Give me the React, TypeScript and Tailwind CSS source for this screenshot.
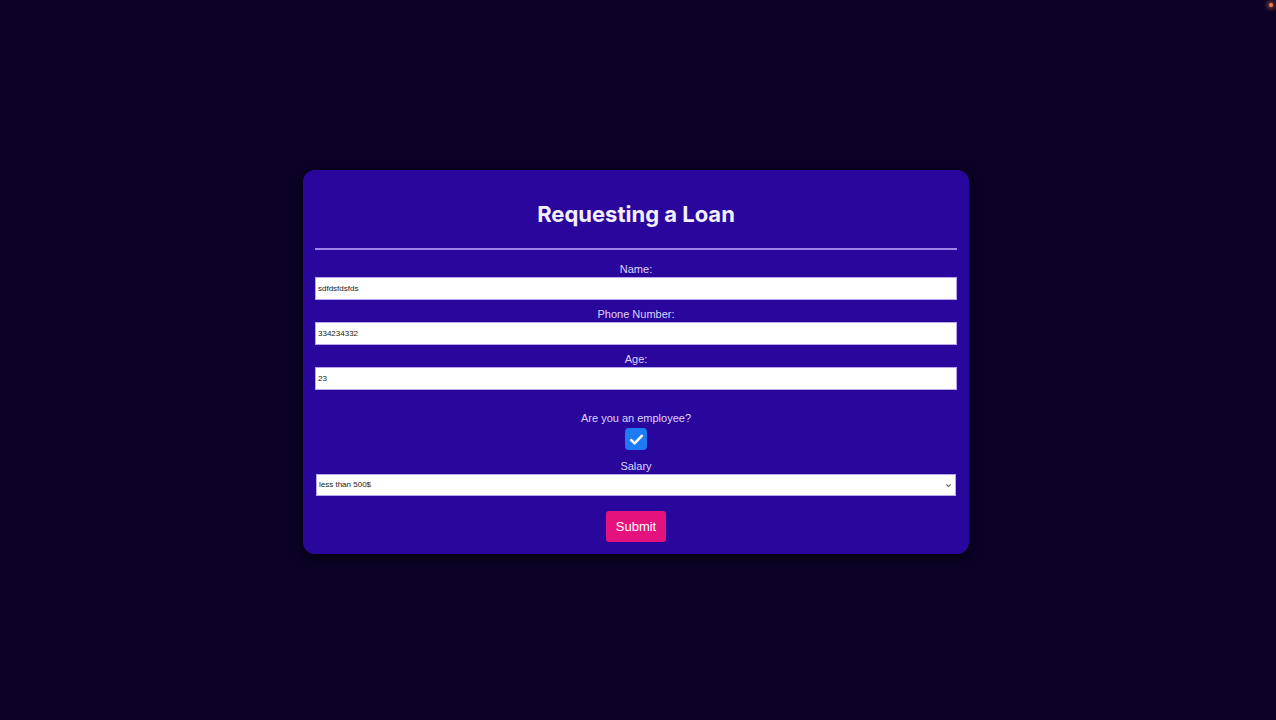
import React from "react";

const fields = [
  { label: "Name:", value: "sdfdsfdsfds" },
  { label: "Phone Number:", value: "334234332" },
  { label: "Age:", value: "23" },
];

export default function App() {
  const [employee, setEmployee] = React.useState(true);

  return (
    <div className="relative min-h-[720px] w-full bg-[#0b0226] flex justify-center pt-[170px] font-['Inter','Liberation_Sans',sans-serif]">
      <span className="absolute right-[3px] top-[3px] h-[4px] w-[4px] rounded-full bg-[#e9804f] shadow-[0_0_4px_2px_rgba(233,128,79,0.5)]" />

      <div className="mr-[4px] w-[666px] h-[384px] self-start rounded-[12px] bg-[#2a079c] px-3 pt-[30px] pb-3 shadow-[0_4px_14px_rgba(0,0,0,0.6)] flex flex-col items-center">
        <h1 className="text-[22px] leading-[28px] font-bold text-[#f3efff]">Requesting a Loan</h1>
        <div className="mt-[20px] h-[2px] w-full bg-[#9c84e8]" />

        <div className="mt-[12px] flex w-full flex-col">
          {fields.map((f, i) => (
            <div key={f.label} className={`flex flex-col items-center ${i > 0 ? "mt-[7px]" : ""}`}>
              <label className="text-[11px] leading-[14px] text-[#ddd3ff] font-['Liberation_Sans',sans-serif]">{f.label}</label>
              <input
                defaultValue={f.value}
                className="mt-[1px] h-[23px] w-full bg-white border border-[#b9a6f2] px-[2px] text-[8px] text-[#222] font-['Liberation_Sans',sans-serif] outline-none"
              />
            </div>
          ))}
        </div>

        <p className="mt-[21px] text-[11px] leading-[14px] text-[#ddd3ff] font-['Liberation_Sans',sans-serif]">Are you an employee?</p>
        <button
          type="button"
          onClick={() => setEmployee(!employee)}
          className="mt-[3px] flex h-[22px] w-[22px] items-center justify-center rounded-[4px] bg-[#1f7bf4]"
        >
          {employee && (
            <svg viewBox="0 0 16 16" className="h-[17px] w-[17px]" fill="none" stroke="white" strokeWidth="2.4" strokeLinecap="round" strokeLinejoin="round">
              <path d="M3 8.5l3.2 3.2L13 4.5" />
            </svg>
          )}
        </button>

        <p className="mt-[9px] text-[11px] leading-[14px] text-[#ddd3ff] font-['Liberation_Sans',sans-serif]">Salary</p>
        <div className="relative mt-[1px] w-[640px]">
          <select
            defaultValue="lt500"
            className="block h-[22px] w-full appearance-none bg-white border border-[#b9a6f2] px-[2px] text-[8px] text-[#222] font-['Liberation_Sans',sans-serif] outline-none"
          >
            <option value="lt500">less than 500$</option>
            <option value="500to1000">500$ - 1000$</option>
            <option value="gt1000">more than 1000$</option>
          </select>
          <svg viewBox="0 0 10 10" className="pointer-events-none absolute right-[4px] top-[8px] h-[7px] w-[7px]" fill="none" stroke="#555" strokeWidth="1.6">
            <path d="M2 3.5l3 3 3-3" />
          </svg>
        </div>

        <button className="mt-[15px] h-[31px] w-[60px] rounded-[3px] bg-[#e3127c] text-[13px] text-white font-['Liberation_Sans',sans-serif]">
          Submit
        </button>
      </div>
    </div>
  );
}
